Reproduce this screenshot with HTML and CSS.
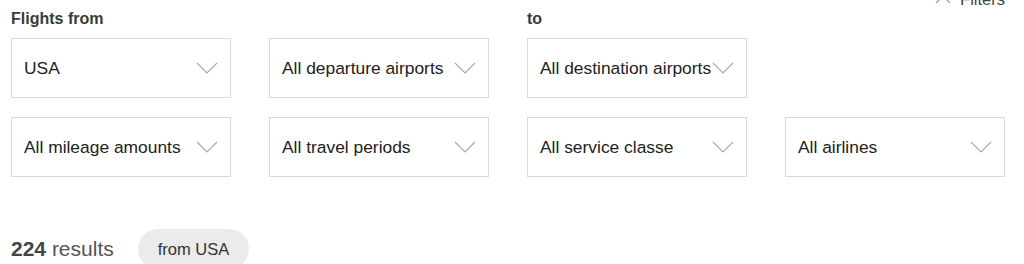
FILE: index.html
```html
<!DOCTYPE html>
<html lang="en">
<head>
<meta charset="utf-8">
<title>Flights</title>
<link rel="stylesheet" href="styles.css">
</head>
<body>
<div class="page">
  <div class="filter-grid">
    <div class="label">Flights from</div>
    <div class="label empty"></div>
    <div class="label">to</div>
    <button class="filters-toggle" type="button">
      <svg class="up" width="16" height="9" viewBox="0 0 16 9"><polyline points="1,8 8,1 15,8" fill="none" stroke="#999" stroke-width="1.2"/></svg>
      <span>Filters</span>
    </button>

    <div class="select"><span class="value">USA</span><svg class="chev" width="22" height="12" viewBox="0 0 22 12"><polyline points="1,1 11,11 21,1" fill="none" stroke="#aaa" stroke-width="1.2"/></svg></div>
    <div class="select"><span class="value">All departure airports</span><svg class="chev" width="22" height="12" viewBox="0 0 22 12"><polyline points="1,1 11,11 21,1" fill="none" stroke="#aaa" stroke-width="1.2"/></svg></div>
    <div class="select"><span class="value">All destination airports</span><svg class="chev" width="22" height="12" viewBox="0 0 22 12"><polyline points="1,1 11,11 21,1" fill="none" stroke="#aaa" stroke-width="1.2"/></svg></div>
    <div class="spacer"></div>

    <div class="select"><span class="value">All mileage amounts</span><svg class="chev" width="22" height="12" viewBox="0 0 22 12"><polyline points="1,1 11,11 21,1" fill="none" stroke="#aaa" stroke-width="1.2"/></svg></div>
    <div class="select"><span class="value">All travel periods</span><svg class="chev" width="22" height="12" viewBox="0 0 22 12"><polyline points="1,1 11,11 21,1" fill="none" stroke="#aaa" stroke-width="1.2"/></svg></div>
    <div class="select"><span class="value">All service classe</span><svg class="chev" width="22" height="12" viewBox="0 0 22 12"><polyline points="1,1 11,11 21,1" fill="none" stroke="#aaa" stroke-width="1.2"/></svg></div>
    <div class="select"><span class="value">All airlines</span><svg class="chev" width="22" height="12" viewBox="0 0 22 12"><polyline points="1,1 11,11 21,1" fill="none" stroke="#aaa" stroke-width="1.2"/></svg></div>
  </div>

  <div class="results">
    <div class="count"><strong>224</strong> results</div>
    <div class="pill">from USA</div>
  </div>
</div>
</body>
</html>
```

FILE: styles.css
```css
* { box-sizing: border-box; }
html, body { margin: 0; padding: 0; background: #fff; }
body {
  font-family: "Liberation Sans", Arial, Helvetica, sans-serif;
  color: #222;
  overflow: hidden;
}
.page {
  padding: 10px 20px 0 11px;
}
.filter-grid {
  display: grid;
  grid-template-columns: repeat(4, 220px);
  column-gap: 38px;
  row-gap: 19px;
}
.label {
  font-size: 16px;
  line-height: 18px;
  font-weight: bold;
  color: #3a3a3a;
  margin-bottom: -9px;
}
.filters-toggle {
  justify-self: end;
  align-self: start;
  margin-top: -20px;
  background: none;
  border: 0;
  padding: 0;
  display: flex;
  align-items: center;
  gap: 9px;
  font-family: inherit;
  font-size: 16.5px;
  color: #444;
  line-height: 18px;
}
.select {
  height: 60px;
  border: 1px solid #d9d9d9;
  display: flex;
  align-items: center;
  padding: 0 12px 0 12px;
  font-size: 17.4px;
  color: #222;
}
.value { white-space: nowrap; }
.chev { flex-shrink: 0; margin-left: auto; }
.results {
  margin-top: 52px;
  display: flex;
  align-items: center;
  gap: 24px;
}
.count {
  font-size: 21px;
  color: #555;
}
.count strong { color: #444; }
.pill {
  height: 40px;
  padding: 0 20px;
  border-radius: 20px;
  background: #ebebeb;
  display: flex;
  align-items: center;
  font-size: 16.5px;
  color: #333;
}
```
